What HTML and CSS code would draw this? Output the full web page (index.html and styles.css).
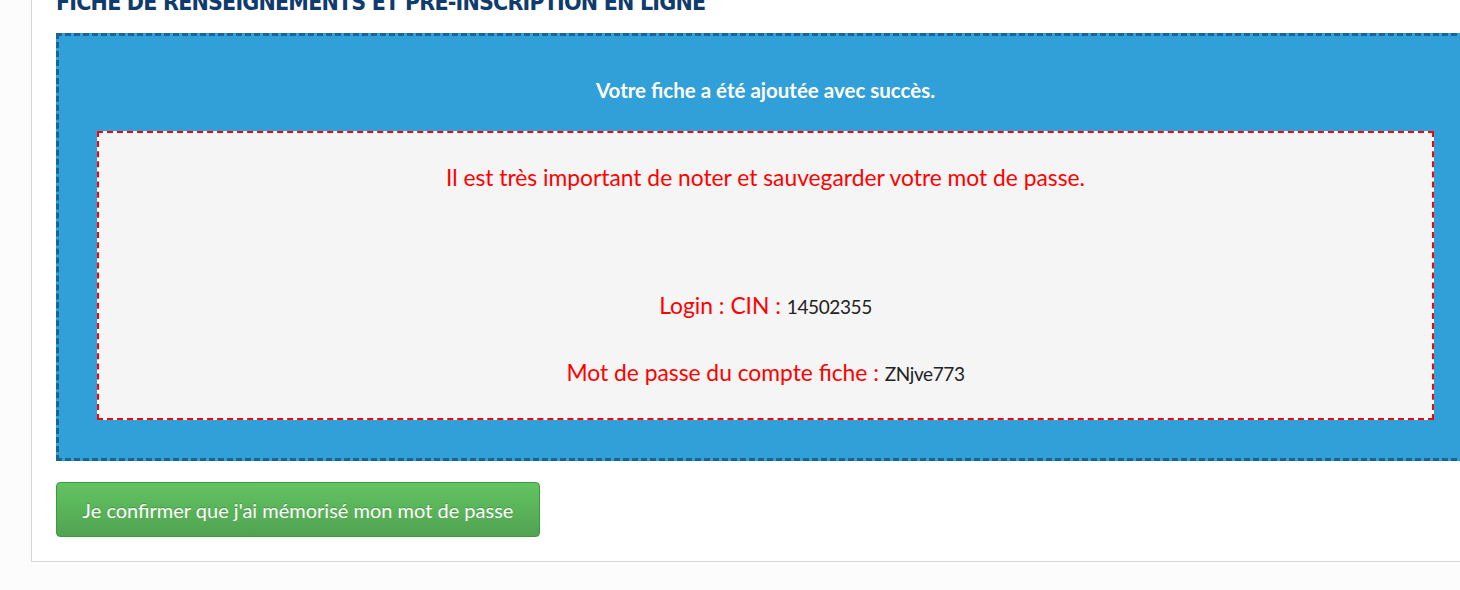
FILE: index.html
```html
<!DOCTYPE html>
<html lang="fr">
<head>
<meta charset="utf-8">
<title>Fiche de renseignements</title>
<link rel="stylesheet" href="styles.css">
</head>
<body>
<div class="panel">
  <h2 class="title">Fiche de renseignements et pré-inscription en ligne</h2>
  <div class="success-box">
    <p class="success-msg">Votre fiche a été ajoutée avec succès.</p>
    <div class="notice">
      <p class="notice-warn">Il est très important de noter et sauvegarder votre mot de passe.</p>
      <p class="notice-login">Login : CIN : <span class="value">14502355</span></p>
      <p class="notice-pass">Mot de passe du compte fiche : <span class="value">ZNjve773</span></p>
    </div>
  </div>
  <button class="btn-confirm" type="button">Je confirmer que j'ai mémorisé mon mot de passe</button>
</div>
</body>
</html>
```
FILE: styles.css
```css
html, body {
  margin: 0;
  padding: 0;
  overflow: hidden;
  background: #fcfcfc;
}
body {
  font-family: Lato, "Open Sans", sans-serif;
}
.panel {
  margin-left: 31px;
  width: 1500px;
  background: #fff;
  border-left: 1px solid #d6d6d6;
  border-bottom: 1px solid #d6d6d6;
  padding: 0 0 24px 24px;
}
.title {
  margin: -14px 0 0 0;
  height: 47px;
  line-height: 32px;
  font-family: "DejaVu Sans Condensed", sans-serif;
  font-weight: bold;
  font-size: 23px;
  letter-spacing: -0.8px;
  text-transform: uppercase;
  color: #0f3b6d;
  white-space: nowrap;
}
.success-box {
  border: 3px dashed #1b6494;
  background: #319fd8;
  padding: 38px;
  box-sizing: border-box;
  width: 1419px;
}
.success-msg {
  margin: 4px 0 29px;
  line-height: 24px;
  font-size: 20.5px;
  font-weight: bold;
  color: #fff;
  text-align: center;
}
.notice {
  border: 2px dashed #ff0000;
  background: linear-gradient(#f5f5f5, #f5f5f5) padding-box, #fff;
  padding: 29px 0 31px;
  height: 289px;
  box-sizing: border-box;
  text-align: center;
  color: #ff0000;
  font-size: 22.8px;
}
.notice p {
  margin: 0;
  height: 30px;
  line-height: 30px;
}
.notice-login {
  margin-top: 98px !important;
}
.notice-pass {
  margin-top: 37px !important;
}
.value {
  color: #222;
  font-size: 19px;
  line-height: 0;
  letter-spacing: -0.4px;
}
.btn-confirm {
  display: block;
  margin-top: 21px;
  width: 484px;
  height: 55px;
  border: 1px solid #419641;
  border-radius: 4px;
  background: linear-gradient(#62c462, #51a351);
  color: #fff;
  font-family: Lato, "Open Sans", sans-serif;
  font-size: 20px;
  text-shadow: 0 -1px 0 rgba(0,0,0,0.2);
  padding: 0;
}
```
